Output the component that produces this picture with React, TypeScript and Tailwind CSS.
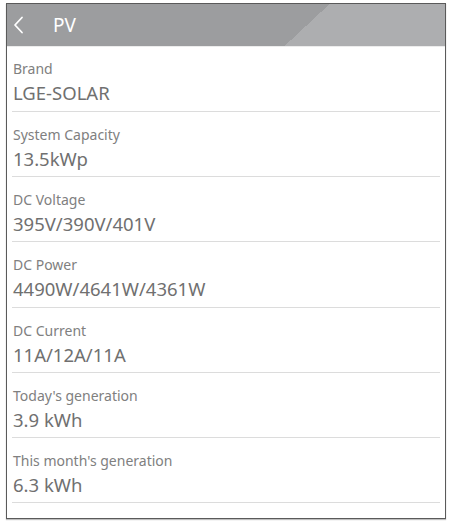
import { FC } from "react";

// ── Data ──────────────────────────────────────────────────────────────────────

const ROWS: Array<{ label: string; value: string }> = [
  { label: "Brand", value: "LGE-SOLAR" },
  { label: "System Capacity", value: "13.5kWp" },
  { label: "DC Voltage", value: "395V/390V/401V" },
  { label: "DC Power", value: "4490W/4641W/4361W" },
  { label: "DC Current", value: "11A/12A/11A" },
  { label: "Today's generation", value: "3.9 kWh" },
  { label: "This month's generation", value: "6.3 kWh" },
];

// ── Row ───────────────────────────────────────────────────────────────────────

const InfoRow: FC<{ label: string; value: string; first?: boolean }> = ({ label, value, first }) => (
  <div className={`flex flex-col border-b border-[#dcdcdc] pl-px ${first ? "h-[65px] pt-[12px]" : "h-[65.2px] pt-[13px]"}`}>
    <span className="text-[14px] leading-[20px] text-[#808080]">{label}</span>
    <span className="mt-[2px] text-[18.5px] leading-[24px] text-[#707070]">{value}</span>
  </div>
);

// ── App ───────────────────────────────────────────────────────────────────────

export default function App() {
  return (
    <div
      className="w-[454px] h-[530px] bg-white pt-[3px] pl-[6px]"
      style={{ fontFamily: '"Noto Sans", "Open Sans", sans-serif' }}
    >
      <div className="w-[440px] h-[516px] border border-[#5a5a5a] flex flex-col shadow-[0_1px_1px_rgba(0,0,0,0.25)]">
        {/* Header */}
        <div className="h-[43px] shrink-0 flex items-center gap-[29px] pl-[5px] bg-[linear-gradient(137deg,#9c9d9f_220px,#adaeb0_220px)] border-b border-[#ececec]">
          <svg width="12" height="18" viewBox="0 0 12 18" fill="none">
            <path d="M10 1.5L3 9L10 16.5" stroke="#ffffff" strokeWidth="1.8" strokeLinecap="round" strokeLinejoin="round" />
          </svg>
          <span className="text-[19px] leading-none text-white">PV</span>
        </div>

        {/* Rows */}
        <div className="flex flex-col px-[5px]">
          {ROWS.map((r, i) => (
            <InfoRow key={r.label} label={r.label} value={r.value} first={i === 0} />
          ))}
        </div>
      </div>
    </div>
  );
}
